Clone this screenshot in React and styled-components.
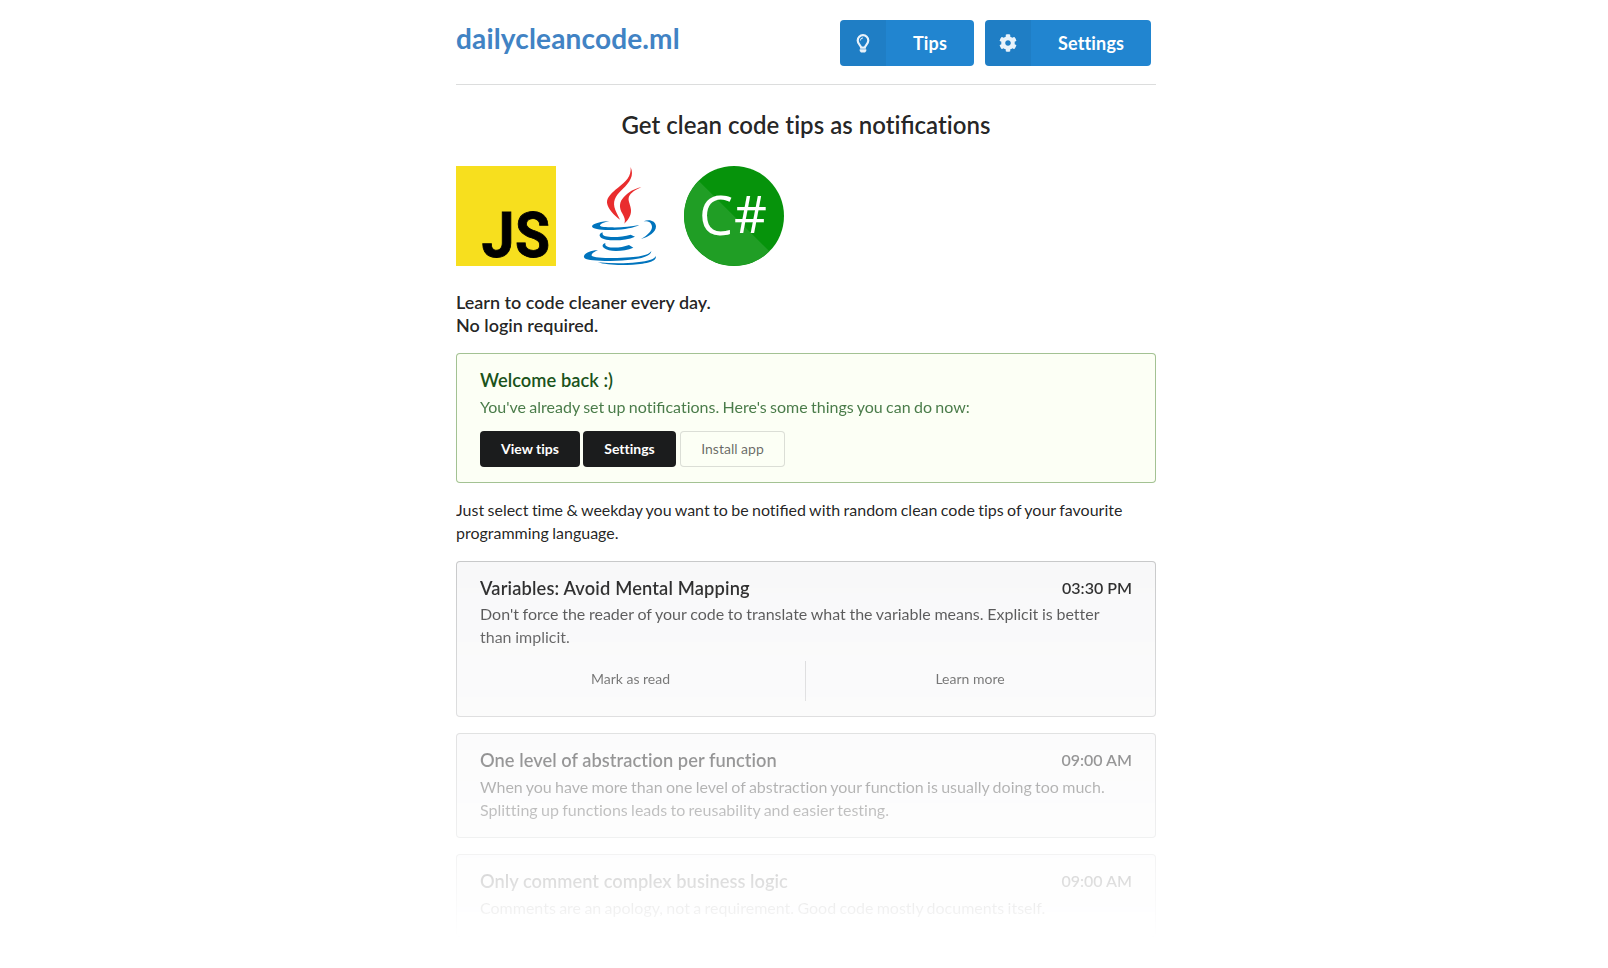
import React from "react";
import styled, { createGlobalStyle } from "styled-components";
import { FaCog } from "react-icons/fa";

const GlobalStyle = createGlobalStyle`
  * { box-sizing: border-box; }
  html { font-size: 16px; }
  body {
    margin: 0;
    background: #fff;
    color: rgba(0, 0, 0, 0.87);
    font-family: Lato, "Liberation Sans", sans-serif;
    font-size: 16px;
    line-height: 1.4285;
    font-variant-ligatures: none;
    overflow: hidden;
  }
  h1, h2, h3, p { margin: 0; }
`;

const Page = styled.main`
  width: 700px;
  height: 968px;
  margin: 0 0 0 456px;
  overflow: hidden;
`;

const TopBar = styled.header`
  display: flex;
  justify-content: space-between;
  align-items: flex-start;
  height: 85px;
  padding: 20px 5px 0 0;
  border-bottom: 1px solid #dcdddd;
`;

const Brand = styled.h1`
  color: #4183c4;
  font-size: 28px;
  font-weight: 700;
  line-height: 36px;
  letter-spacing: 0.16px;
`;

const Nav = styled.nav`
  display: flex;
  gap: 11px;
`;

const NavButton = styled.button`
  display: flex;
  width: ${(p) => p.$width}px;
  height: 46px;
  padding: 0;
  border: 0;
  border-radius: 4px;
  overflow: hidden;
  background: #2185d0;
  color: #fff;
  font: 700 18px/46px Lato, sans-serif;
  font-variant-ligatures: none;
  letter-spacing: 0.15px;
`;

const NavIcon = styled.span`
  display: flex;
  align-items: center;
  justify-content: center;
  width: 46px;
  height: 46px;
  background: rgba(0, 0, 0, 0.05);
  color: rgba(255, 255, 255, 0.9);
`;

const NavLabel = styled.span`
  flex: 1;
  padding-left: 27px;
  text-align: left;
`;

const Headline = styled.h2`
  margin-top: 24px;
  font-size: 24px;
  font-weight: 600;
  line-height: 31px;
  letter-spacing: 0.02px;
  text-align: center;
`;

const Logos = styled.div`
  display: flex;
  gap: 14px;
  margin-top: 26px;
  svg { display: block; overflow: visible; }
`;

const Lead = styled.h3`
  margin-top: 24.5px;
  font-size: 18px;
  font-weight: 600;
  line-height: 23px;
`;

const Message = styled.section`
  margin-bottom: 16px;
  padding: 16px 24px;
  border-radius: 4px;
  background: #f8f8f9;
  box-shadow: 0 0 0 1px rgba(34, 36, 38, 0.22) inset;
`;

const TipMessage = styled(Message)`
  padding-bottom: ${(p) => (p.$withActions ? 16 : 17)}px;
`;

const WelcomeMessage = styled(Message)`
  margin-top: 16.5px;
  background: #fcfff5;
  box-shadow: 0 0 0 1px #a3c293 inset;
  color: #2c662d;
`;

const MessageHead = styled.div`
  display: flex;
  justify-content: space-between;
  align-items: center;
  margin-top: -2px;
  color: ${(p) => (p.$positive ? "#1a531b" : "inherit")};
`;

const MessageTitle = styled.h3`
  font-size: 18.286px;
  font-weight: 600;
  line-height: 26.12px;
  letter-spacing: ${(p) => p.$track || 0}px;
`;

const Time = styled.span`
  font-weight: 600;
`;

const MessageText = styled.p`
  margin-top: ${(p) => (p.$tight ? 1.8 : 2.6)}px;
  opacity: 0.85;
  word-spacing: ${(p) => p.$wordGap || 0}px;
`;

const Ligature = styled.span`
  font-variant-ligatures: common-ligatures;
  letter-spacing: 0;
`;

const Actions = styled.div`
  display: flex;
  margin-top: 12.8px;
`;

const Button = styled.button`
  height: 36px;
  width: ${(p) => p.$width}px;
  margin-right: ${(p) => p.$gap || 0}px;
  padding: 0;
  border: 0;
  border-radius: 4px;
  background: ${(p) => (p.$basic ? "transparent" : "#1b1c1d")};
  box-shadow: ${(p) => (p.$basic ? "0 0 0 1px rgba(34, 36, 38, 0.15) inset" : "none")};
  color: ${(p) => (p.$basic ? "rgba(0, 0, 0, 0.6)" : "#fff")};
  font: ${(p) => (p.$basic ? 400 : 700)} 14px/36px Lato, sans-serif;
  font-variant-ligatures: none;
`;

const Intro = styled.p`
  margin-bottom: 16px;
  word-spacing: -0.7px;
`;

const Preview = styled.div`
  height: 378px;
  overflow: hidden;
  mask-image: linear-gradient(to bottom, #000, transparent);
`;

const SplitActions = styled.div`
  display: grid;
  grid-template-columns: 349px 1fr;
  margin: 12.3px 0 0 -24px;
`;

const SplitButton = styled.button`
  height: 40px;
  padding: 0 0 4px ${(p) => (p.$divided ? 2 : 0)}px;
  border: 0;
  border-left: ${(p) => (p.$divided ? "1px solid rgba(34, 36, 38, 0.18)" : "0")};
  background: transparent;
  color: rgba(0, 0, 0, 0.78);
  font: 400 14px/36px Lato, sans-serif;
`;

const LogoText = styled.text`
  font-family: ${(p) => p.$family};
  font-weight: ${(p) => p.$weight};
  font-size: ${(p) => p.$size}px;
`;

function BulbIcon() {
  return (
    <svg width="14" height="19" viewBox="0 0 14 19" fill="none" stroke="currentColor">
      <path d="M5.2 13.6C5 11.6 1.7 10 1.7 6.5A5.3 5.3 0 0 1 12.3 6.5C12.3 10 9 11.6 8.8 13.6Z" strokeWidth="2.2" />
      <path d="M4.4 6.5A2.6 2.6 0 0 1 7 3.9" strokeWidth="1" />
      <path d="M3.7 15.2H10.3V17L9 18.6H5L3.7 17Z" fill="currentColor" stroke="none" />
    </svg>
  );
}

function JsLogo() {
  return (
    <svg width="100" height="100" viewBox="0 0 100 100">
      <rect width="100" height="100" fill="#f7df1e" />
      <g stroke="#000" strokeWidth="0.9">
        <LogoText $family="Roboto, sans-serif" $weight="700" $size="63" x="25.5" y="91" textLength="33" lengthAdjust="spacingAndGlyphs">J</LogoText>
        <LogoText $family="Roboto, sans-serif" $weight="700" $size="63" x="59" y="91" textLength="35" lengthAdjust="spacingAndGlyphs">S</LogoText>
      </g>
    </svg>
  );
}

function JavaLogo() {
  return (
    <svg width="100" height="100" viewBox="0 18 300 300">
      <g fill="#e92d2e">
        <path d="M182 21C193 47 180 66 158 87C134 109 127 126 136 150C141 162 146 170 150 179C132 165 113 146 111 128C110 112 125 98 144 83C169 64 184 49 182 21Z" />
        <path d="M214 82C190 92 178 103 176 114C174 124 182 135 183 150C184 168 173 181 163 191C168 177 161 168 154 155C147 140 149 125 161 112C175 97 192 86 214 82Z" />
      </g>
      <g fill="#0074bd">
        <path d="M118 183C97 184 67 190 66 199C67 208 94 211 129 210C164 209 193 203 208 195C181 200 151 203 122 202C99 202 89 200 90 196C91 191 103 187 118 183Z" />
        <path d="M221 184C237 176 257 182 258 199C258 217 237 231 213 237C235 225 246 211 246 201C245 188 237 183 221 184Z" />
        <path d="M98 217C88 221 86 227 93 233C105 243 162 245 195 230L182 224C158 231 124 233 107 229C98 227 97 222 98 217Z" />
        <path d="M106 249C96 253 96 259 102 264C117 277 161 275 190 263L177 255C156 263 128 265 113 260C106 258 105 254 106 249Z" />
        <path d="M84 271C64 270 39 281 42 292C46 302 84 304 139 302C196 301 243 292 244 273C238 283 220 289 180 292C133 296 71 294 65 287C64 281 73 275 84 271Z" />
        <path d="M83 307C126 311 167 311 201 307C237 303 255 297 257 288C262 304 231 311 188 314C145 317 106 314 83 307Z" />
      </g>
    </svg>
  );
}

function CSharpLogo() {
  return (
    <svg width="100" height="100" viewBox="0 0 100 100">
      <circle cx="50" cy="50" r="50" fill="#06930b" />
      <path d="M14.645 14.645A50 50 0 0 0 85.355 85.355Z" fill="#209e25" />
      <LogoText $family='"Open Sans", sans-serif' $weight="400" $size="54" fill="#fff" x="15" y="69" textLength="34" lengthAdjust="spacingAndGlyphs">C</LogoText>
      <LogoText $family='"Open Sans", sans-serif' $weight="400" $size="51" fill="#fff" x="50" y="67" textLength="33" lengthAdjust="spacingAndGlyphs">#</LogoText>
    </svg>
  );
}

function Tip({ title, time, text, titleTrack, wordGap, children }) {
  const withActions = Boolean(children);
  return (
    <TipMessage $withActions={withActions}>
      <MessageHead>
        <MessageTitle $track={titleTrack}>{title}</MessageTitle>
        <Time>{time}</Time>
      </MessageHead>
      <MessageText $tight={withActions} $wordGap={wordGap}>{text}</MessageText>
      {children}
    </TipMessage>
  );
}

export default function App() {
  return (
    <>
      <GlobalStyle />
      <Page>
        <TopBar>
          <Brand>dailycleancode.ml</Brand>
          <Nav>
            <NavButton $width={134}>
              <NavIcon><BulbIcon /></NavIcon>
              <NavLabel>Tips</NavLabel>
            </NavButton>
            <NavButton $width={166}>
              <NavIcon><FaCog size={18} /></NavIcon>
              <NavLabel>Settings</NavLabel>
            </NavButton>
          </Nav>
        </TopBar>
        <Headline>Get clean code tips as noti<Ligature>fi</Ligature>cations</Headline>
        <Logos>
          <JsLogo />
          <JavaLogo />
          <CSharpLogo />
        </Logos>
        <Lead>
          Learn to code cleaner every day.
          <br />
          No login required.
        </Lead>
        <WelcomeMessage>
          <MessageHead $positive>
            <MessageTitle $track={0.04}>Welcome back :)</MessageTitle>
          </MessageHead>
          <MessageText $wordGap={-0.73}>
            You've already set up noti<Ligature>fi</Ligature>cations. Here's some things you can do now:
          </MessageText>
          <Actions>
            <Button $width={100} $gap={3}>View tips</Button>
            <Button $width={93} $gap={4}>Settings</Button>
            <Button $width={105} $basic>Install app</Button>
          </Actions>
        </WelcomeMessage>
        <Intro>
          Just select time &amp; weekday you want to be noti<Ligature>fi</Ligature>ed with random clean code tips of your favourite
          programming language.
        </Intro>
        <Preview>
          <Tip
            title="Variables: Avoid Mental Mapping"
            time="03:30 PM"
            text="Don't force the reader of your code to translate what the variable means. Explicit is better than implicit."
            titleTrack={0.15}
            wordGap={-0.4}
          >
            <SplitActions>
              <SplitButton>Mark as read</SplitButton>
              <SplitButton $divided>Learn more</SplitButton>
            </SplitActions>
          </Tip>
          <Tip
            title="One level of abstraction per function"
            time="09:00 AM"
            text="When you have more than one level of abstraction your function is usually doing too much. Splitting up functions leads to reusability and easier testing."
            titleTrack={0.04}
            wordGap={-0.77}
          />
          <Tip
            title="Only comment complex business logic"
            time="09:00 AM"
            text="Comments are an apology, not a requirement. Good code mostly documents itself."
            titleTrack={0.03}
            wordGap={-0.77}
          />
        </Preview>
      </Page>
    </>
  );
}
